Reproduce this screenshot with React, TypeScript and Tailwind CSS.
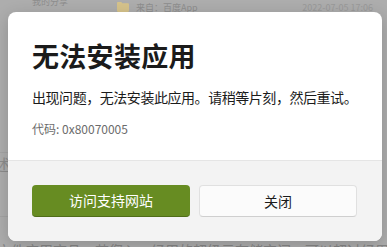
import React from 'react';

const cjk = { fontFamily: '"Noto Sans CJK SC", "Noto Sans", sans-serif' };

const FolderIcon = () => (
  <svg width="12" height="10" viewBox="0 0 12 10" className="shrink-0">
    <path d="M0 1.2C0 .5.5 0 1.2 0h3l1.2 1.3h5.4c.7 0 1.2.5 1.2 1.2v6.3c0 .7-.5 1.2-1.2 1.2H1.2C.5 10 0 9.5 0 8.8z" fill="#d6c38b" />
  </svg>
);

export default function App() {
  return (
    <div className="relative w-[387px] h-[247px] overflow-hidden bg-[#adadad]" style={cjk}>
      {/* page behind the dim layer */}
      <div className="flex flex-col h-full">
        <div className="flex items-start h-[12px] overflow-hidden text-[9px] text-[#8d8d8d]">
          <span className="ml-[32px] -mt-[5px] w-[85px]">我的分享</span>
          <div className="mt-[2px]"><FolderIcon /></div>
          <span className="ml-[7px] mt-[1px]">来自：百度App</span>
          <span className="ml-auto mr-[14px] mt-[1px] text-[#999999]">2022-07-05 17:06</span>
        </div>
        <div className="flex-1 flex">
          <div className="w-[8px] flex flex-col pt-[140px] overflow-hidden">
            <div className="border-t border-[#a3a3a3]" />
            <span className="-ml-[6px] mt-[1px] text-[16px] leading-[20px] text-[#8c8c8c]">述</span>
            <div className="mt-[42px] border-t border-[#a3a3a3]" />
          </div>
        </div>
        <div className="h-[6px] overflow-hidden text-[14px] leading-[18px] text-[#858585] whitespace-nowrap">
          <span className="-ml-[3px]">文件应用商品，若您入，经用的超级云存储空间，可以超过经用空间</span>
        </div>
      </div>

      {/* dialog */}
      <div className="absolute left-[8px] top-[12px] w-[374px] h-[229px] rounded-[8px] bg-white overflow-hidden flex flex-col shadow-[0_4px_16px_rgba(0,0,0,0.18)]">
        <div className="px-[24px] pt-[26px] pb-[23px] flex flex-col">
          <h1 className="text-[27px] leading-[36px] font-bold text-[#1b1b1b] tracking-[0.3px]">无法安装应用</h1>
          <p className="mt-[13px] text-[14px] leading-[20px] text-[#1b1b1b] whitespace-nowrap tracking-[-0.45px]">出现问题，无法安装此应用。请稍等片刻，然后重试。</p>
          <p className="mt-[14px] text-[12px] leading-[16px] text-[#6b6b6b]">代码: 0x80070005</p>
        </div>
        <div className="flex-1 bg-[#f3f3f3] border-t border-[#e5e5e5] px-[24px] pt-[24px] flex gap-[9px]">
          <button className="w-[158px] h-[32px] rounded-[4px] bg-[#678c22] border-b border-[#4f6d18] text-white text-[14px]">访问支持网站</button>
          <button className="w-[158px] h-[32px] rounded-[4px] bg-[#fbfbfb] border border-[#e0e0e0] border-b-[#cfcfcf] text-[#1b1b1b] text-[14px]">关闭</button>
        </div>
      </div>
    </div>
  );
}
